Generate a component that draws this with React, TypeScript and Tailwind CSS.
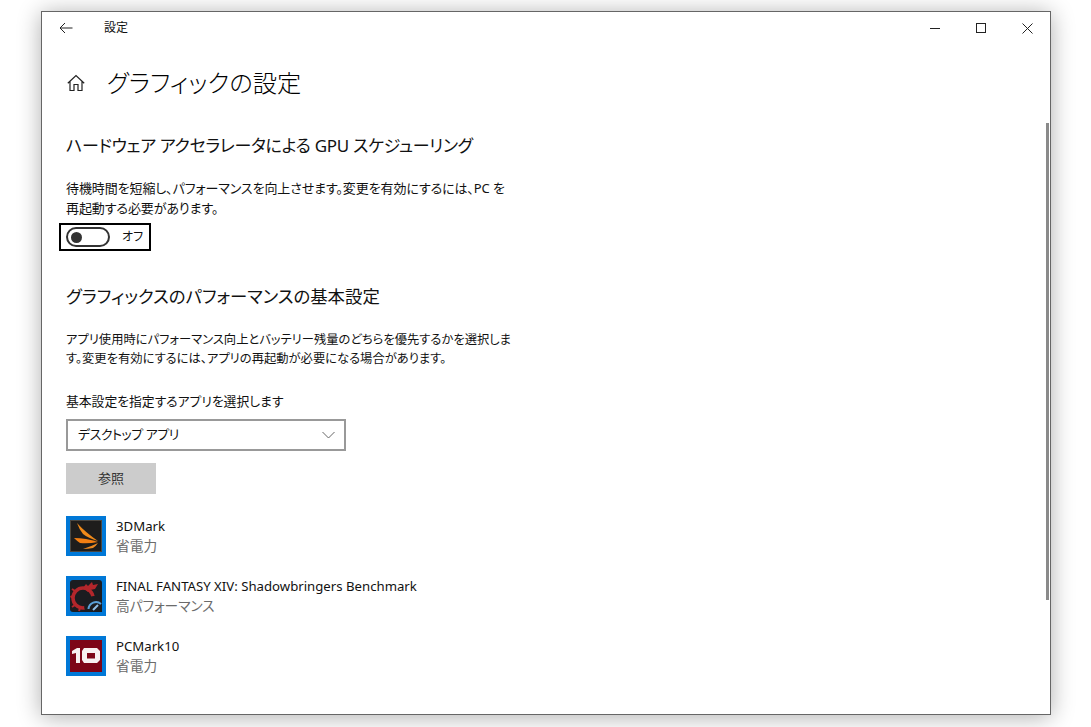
import React from 'react';

const font = "font-['Noto_Sans','Noto_Sans_CJK_JP',sans-serif] [font-feature-settings:'palt']";

const ThreeDMarkIcon = () => (
  <svg width="32" height="32" viewBox="0 0 32 32">
    <rect x="0.5" y="0.5" width="31" height="31" fill="#1e1d1c" stroke="#4a4640" />
    <path d="M7 3 Q15 12 28 21 Q18 18 13 14 Q9 9 7 3 Z" fill="#f08a1a" />
    <path d="M4 18 Q16 18 28 22 Q18 24 10 23 Q7 21 4 18 Z" fill="#f47f12" />
    <path d="M13 29 Q22 26 28 23 Q26 26 23 28 Q18 29 13 29 Z" fill="#ee8a20" />
  </svg>
);

const FinalFantasyIcon = () => (
  <svg width="32" height="32" viewBox="0 0 32 32">
    <rect width="32" height="32" rx="3" fill="#1b1c20" />
    <circle cx="13" cy="18" r="10" fill="none" stroke="#b3262b" strokeWidth="3.5" />
    <path d="M13 8 L16 4 L18 6 L22 2 L23 5 L28 4 L25 9 L20 10 L18 12 Z" fill="#b3262b" />
    <path d="M3 18 L0.5 16 M5 25 L2 27 M10 28 L9 31 M5 11 L2 9" stroke="#b3262b" strokeWidth="2" />
    <path d="M16 32 A10 10 0 0 1 32 20 L32 32 Z" fill="#1b1c20" />
    <path d="M18.5 29 A7.5 7.5 0 0 1 31 24" fill="none" stroke="#5aa0d8" strokeWidth="2" />
    <path d="M23 30 L28 25" stroke="#8fc0e8" strokeWidth="2" />
  </svg>
);

const PcMarkIcon = () => (
  <svg width="32" height="32" viewBox="0 0 32 32">
    <rect width="32" height="32" fill="#7d0517" />
    <path d="M2 11 L7 8 L10 8 L10 23 L6 23 L6 13 L2 14 Z" fill="#f7f0f0" />
    <path fillRule="evenodd" d="M14 8 H27 L30 11 V20 L27 23 H14 L12 20 V11 Z M17 13 V18.5 H25 V13 Z" fill="#f7f0f0" />
  </svg>
);

const apps = [
  { name: '3DMark', pref: '省電力', icon: <ThreeDMarkIcon /> },
  { name: 'FINAL FANTASY XIV: Shadowbringers Benchmark', pref: '高パフォーマンス', icon: <FinalFantasyIcon /> },
  { name: 'PCMark10', pref: '省電力', icon: <PcMarkIcon /> },
];

const App: React.FC = () => {
  return (
    <div className={`${font} w-[1091px] h-[727px] bg-white pt-[11px] pl-[41px] overflow-hidden`}>
      <div className="relative w-[1010px] h-[704px] bg-white border border-[#666666] shadow-[0_2px_22px_rgba(0,0,0,0.32)] text-[#111111]">
        {/* title bar */}
        <div className="flex items-center h-[32px] pl-[17px]">
          <svg width="14" height="12" viewBox="0 0 14 12" fill="none" stroke="#222" strokeWidth="1">
            <path d="M13.5 6 H1 M6 1 L1 6 L6 11" />
          </svg>
          <span className="ml-[31px] text-[12px] leading-[16px]">設定</span>
          <div className="ml-auto flex items-center pr-[17px]">
            <div className="w-[10px] h-px bg-[#222]" />
            <div className="ml-[36px] w-[10px] h-[10px] border border-[#222]" />
            <svg className="ml-[36px]" width="11" height="11" viewBox="0 0 11 11" stroke="#222" strokeWidth="1">
              <path d="M0.5 0.5 L10.5 10.5 M10.5 0.5 L0.5 10.5" />
            </svg>
          </div>
        </div>

        {/* scrollbar */}
        <div className="absolute right-[1px] top-[111px] w-[3px] h-[477px] bg-[#8a8a8a]" />

        {/* page header */}
        <div className="flex items-center mt-[19px] pl-[25px] h-[40px]">
          <svg width="18" height="18" viewBox="0 0 18 18" fill="none" stroke="#222" strokeWidth="1.2">
            <path d="M0.8 9.2 L9 1.5 L17.2 9.2 M3 7.5 V16.5 H7 V10.5 H11 V16.5 H15 V7.5" />
          </svg>
          <h1 className="ml-[22px] text-[24.25px] leading-[32px] font-light text-black">グラフィックの設定</h1>
        </div>

        <div className="pl-[24px] pt-[30px]">
          <h2 className="text-[17px] leading-[26px] tracking-[-0.3px]">ハードウェア アクセラレータによる GPU スケジューリング</h2>
          <p className="mt-[19px] text-[13px] leading-[20px] tracking-[-0.1px]">
            待機時間を短縮し、パフォーマンスを向上させます。変更を有効にするには、PC を
            <br />
            再起動する必要があります。
          </p>
          <div className="flex items-center mt-[5px] -ml-[7px] w-[92px] h-[28px] border-2 border-black pl-[5px]">
            <div className="flex items-center w-[44px] h-[20px] rounded-full border-2 border-[#333] pl-[3px]">
              <div className="w-[11px] h-[11px] rounded-full bg-[#333]" />
            </div>
            <span className="ml-[12px] text-[12px] leading-[16px]">オフ</span>
          </div>

          <h2 className="mt-[32px] text-[17.4px] leading-[26px]">グラフィックスのパフォーマンスの基本設定</h2>
          <p className="mt-[21px] text-[12.3px] leading-[19px]">
            アプリ使用時にパフォーマンス向上とバッテリー残量のどちらを優先するかを選択しま
            <br />
            す。変更を有効にするには、アプリの再起動が必要になる場合があります。
          </p>

          <p className="mt-[24px] text-[12.8px] leading-[19px]">基本設定を指定するアプリを選択します</p>
          <div className="flex items-center justify-between mt-[8px] w-[280px] h-[32px] border-2 border-[#999999] pl-[10px] pr-[9px]">
            <span className="text-[13px] leading-[18px] tracking-[-0.5px] -mt-[2px]">デスクトップ アプリ</span>
            <svg width="13" height="8" viewBox="0 0 13 8" fill="none" stroke="#666" strokeWidth="1">
              <path d="M0.5 1 L6.5 7 L12.5 1" />
            </svg>
          </div>
          <button className="block mt-[12px] w-[90px] h-[31px] bg-[#cccccc] text-[13px] text-[#333]">参照</button>

          <div className="mt-[22px] flex flex-col gap-[20px]">
            {apps.map((app) => (
              <div key={app.name} className="flex items-center h-[40px]">
                <div className="flex items-center justify-center w-[40px] h-[40px] bg-[#0078d7]">{app.icon}</div>
                <div className="ml-[10px]">
                  <div className="text-[13.2px] leading-[20px] -mt-[1px]">{app.name}</div>
                  <div className="text-[13.7px] leading-[20px] text-[#6b6b6b]">{app.pref}</div>
                </div>
              </div>
            ))}
          </div>
        </div>
      </div>
    </div>
  );
};

export default App;
